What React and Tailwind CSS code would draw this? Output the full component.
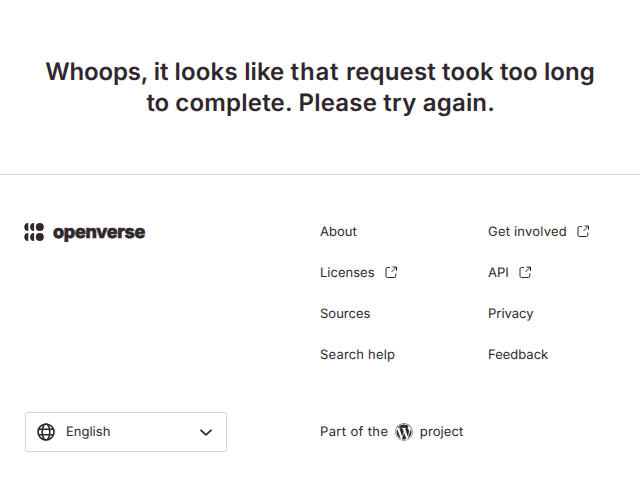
import React from "react";
import { FaWordpress } from "react-icons/fa";

const ExternalIcon = () => (
  <svg className="-mt-px h-4 w-4" viewBox="0 0 16 16" fill="none" stroke="currentColor" strokeWidth="1">
    <path d="M7 3.5H4.5A1.5 1.5 0 0 0 3 5V12A1.5 1.5 0 0 0 4.5 13.5H11.3A1.5 1.5 0 0 0 12.8 12V9.5M9.5 3H13.5V7M13.5 3L8.5 8" />
  </svg>
);

const Logo = () => (
  <svg className="h-[18px] w-[20px]" viewBox="0 0 20 18" fill="currentColor">
    <path d="M4.3 0v8a4 4 0 0 1 0-8zM10.1 0v8a4 4 0 0 1 0-8zM4.3 10v8a4 4 0 0 1 0-8zM10.1 10v8a4 4 0 0 1 0-8z" />
    <circle cx="15.8" cy="4" r="4" />
    <circle cx="15.8" cy="14" r="4" />
  </svg>
);

const Item = ({ label, external }) => (
  <a className="flex h-[17px] items-center gap-2 whitespace-nowrap">
    <span className="pt-0.5">{label}</span>
    {external && <ExternalIcon />}
  </a>
);

export default function App() {
  return (
    <div className="h-[492px] overflow-hidden bg-white font-[Inter,sans-serif] text-[13px] text-[#30272e] [text-rendering:geometricPrecision]">
      <main className="flex h-[174px] justify-center pt-[56px]">
        <h1 className="text-center text-[24px] leading-[31px] font-semibold">
          <span className="tracking-[-0.15px]">Whoops, </span>
          it <span className="tracking-[0.2px]">looks </span>
          <span className="tracking-[0.1px]">like </span>
          <span className="tracking-[0.8px]">that </span>
          <span className="tracking-[0.15px]">request took </span>
          <span className="tracking-[0.1px]">too long</span>
          <br />
          <span className="pl-[1.5px]">to </span>
          <span className="tracking-[0.2px]">complete. Please try again.</span>
        </h1>
      </main>
      <footer className="border-t border-[#d6d4d5] px-6">
        <div className="flex pt-[48px]">
          <div className="flex h-[18px] w-[296px] items-center gap-[9px]">
            <Logo />
            <span className="text-[18px] font-extrabold tracking-[-0.3px] [-webkit-text-stroke:0.6px]">openverse</span>
          </div>
          <nav className="flex leading-[17px]">
            <div className="flex w-[168px] flex-col gap-6">
              <Item label="About" />
              <Item label="Licenses" external />
              <Item label="Sources" />
              <span className="tracking-[0.18px]">
                <Item label="Search help" />
              </span>
            </div>
            <div className="flex flex-col gap-6">
              <span className="tracking-[0.2px]">
                <Item label="Get involved" external />
              </span>
              <Item label="API" external />
              <Item label="Privacy" />
              <Item label="Feedback" />
            </div>
          </nav>
        </div>
        <div className="mt-[49px] flex items-center">
          <div className="mr-[93px] ml-px flex h-10 w-[202px] items-center rounded-xs border border-[#d6d4d5] pr-3 pl-[11px]">
            <svg className="h-[18px] w-[18px]" viewBox="0 0 18 18" fill="none" stroke="currentColor" strokeWidth="1.6">
              <circle cx="9" cy="9" r="8" />
              <ellipse cx="9" cy="9" rx="3.8" ry="8" />
              <path d="M1.5 6.2h15M1.5 11.8h15" />
            </svg>
            <span className="ml-[11px] grow pt-0.5">English</span>
            <svg className="h-3 w-4" viewBox="0 0 16 12" fill="none" stroke="currentColor" strokeWidth="1.8">
              <path d="M2.5 3.8l5.5 5 5.5-5" />
            </svg>
          </div>
          <div className="flex items-center gap-[7px]">
            <span className="pt-0.5 tracking-[0.36px]">Part of the</span>
            <FaWordpress className="-ml-[0.5px] h-[18px] w-[18px]" />
            <span className="pt-0.5 tracking-[0.1px]">project</span>
          </div>
        </div>
      </footer>
    </div>
  );
}
